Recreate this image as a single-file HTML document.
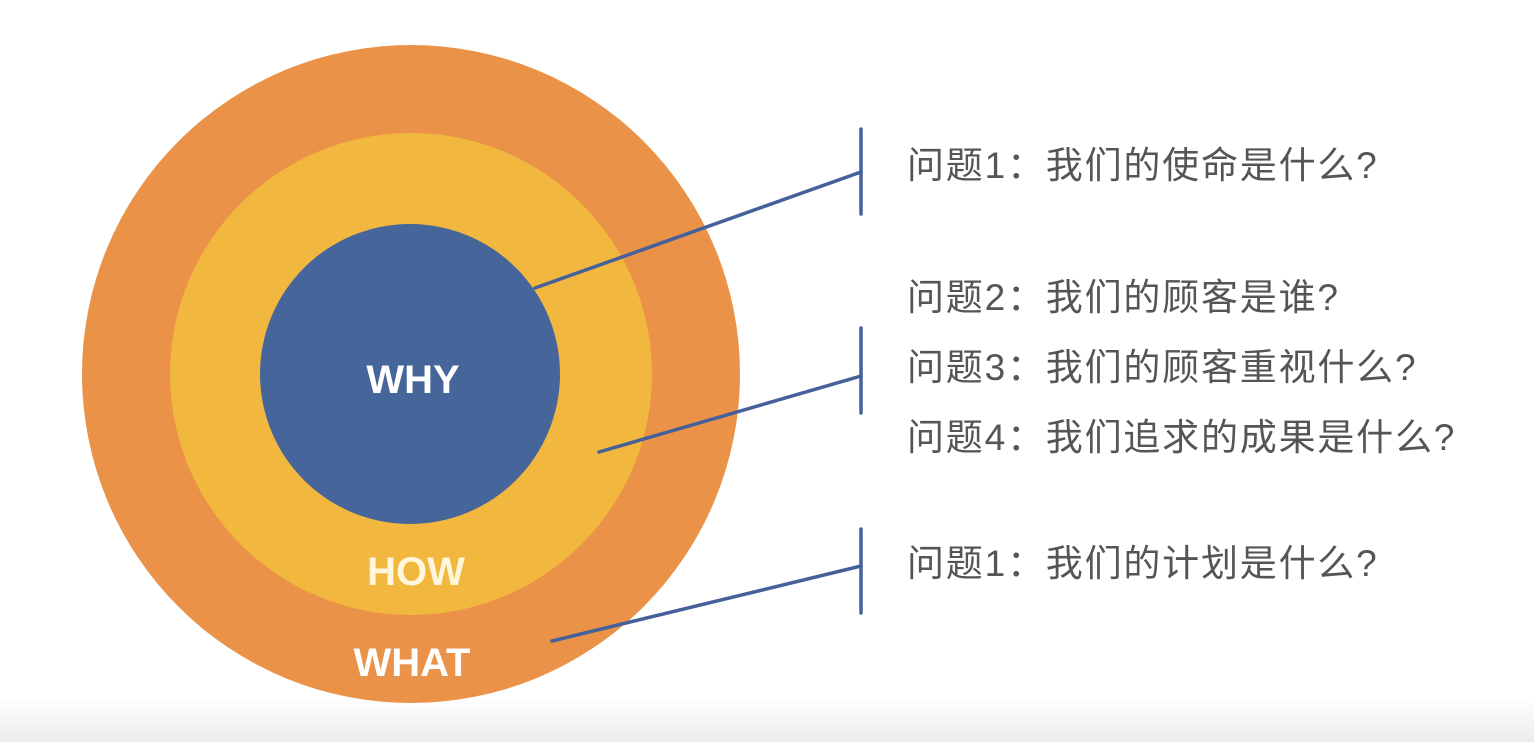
<!DOCTYPE html>
<html><head><meta charset="utf-8"><style>
html,body{margin:0;padding:0;}
body{width:1534px;height:742px;overflow:hidden;background:#fff;position:relative;font-family:"Liberation Sans","Noto Sans CJK SC",sans-serif;}
.bot{position:absolute;left:0;top:698px;width:1534px;height:44px;background:linear-gradient(#fff,#ececec);}
svg{position:absolute;left:0;top:0;}
.t{position:absolute;left:907px;font-size:37px;letter-spacing:1.8px;color:#555;white-space:nowrap;line-height:1;font-family:"Liberation Sans","Noto Sans CJK SC",sans-serif;}
</style></head><body>
<div class="bot"></div>
<svg width="1534" height="742" viewBox="0 0 1534 742">
<circle cx="411" cy="374" r="329" fill="#EA9248"/>
<circle cx="411" cy="374" r="241" fill="#F2B73E"/>
<circle cx="410" cy="374" r="150" fill="#45659B"/>
<g font-family="Liberation Sans, sans-serif" font-weight="bold" font-size="40" text-anchor="middle">
<text x="413" y="393" fill="#fff">WHY</text>
<text x="416" y="585" fill="#FFF6DC">HOW</text>
<text x="412" y="676" fill="#fff">WHAT</text>
</g>
<g stroke="#45609A" stroke-width="3.5" fill="none" stroke-linecap="round">
<line x1="861" y1="129" x2="861" y2="214"/>
<line x1="535" y1="288" x2="861" y2="172"/>
<line x1="861" y1="328" x2="861" y2="413"/>
<line x1="599" y1="452" x2="861" y2="376"/>
<line x1="861" y1="529" x2="861" y2="613"/>
<line x1="552" y1="641" x2="861" y2="566"/>
</g>
</svg>
<div class="t" style="top:147px">问题1：我们的使命是什么?</div>
<div class="t" style="top:279px">问题2：我们的顾客是谁?</div>
<div class="t" style="top:349px">问题3：我们的顾客重视什么?</div>
<div class="t" style="top:419px">问题4：我们追求的成果是什么?</div>
<div class="t" style="top:545px">问题1：我们的计划是什么?</div>
</body></html>
